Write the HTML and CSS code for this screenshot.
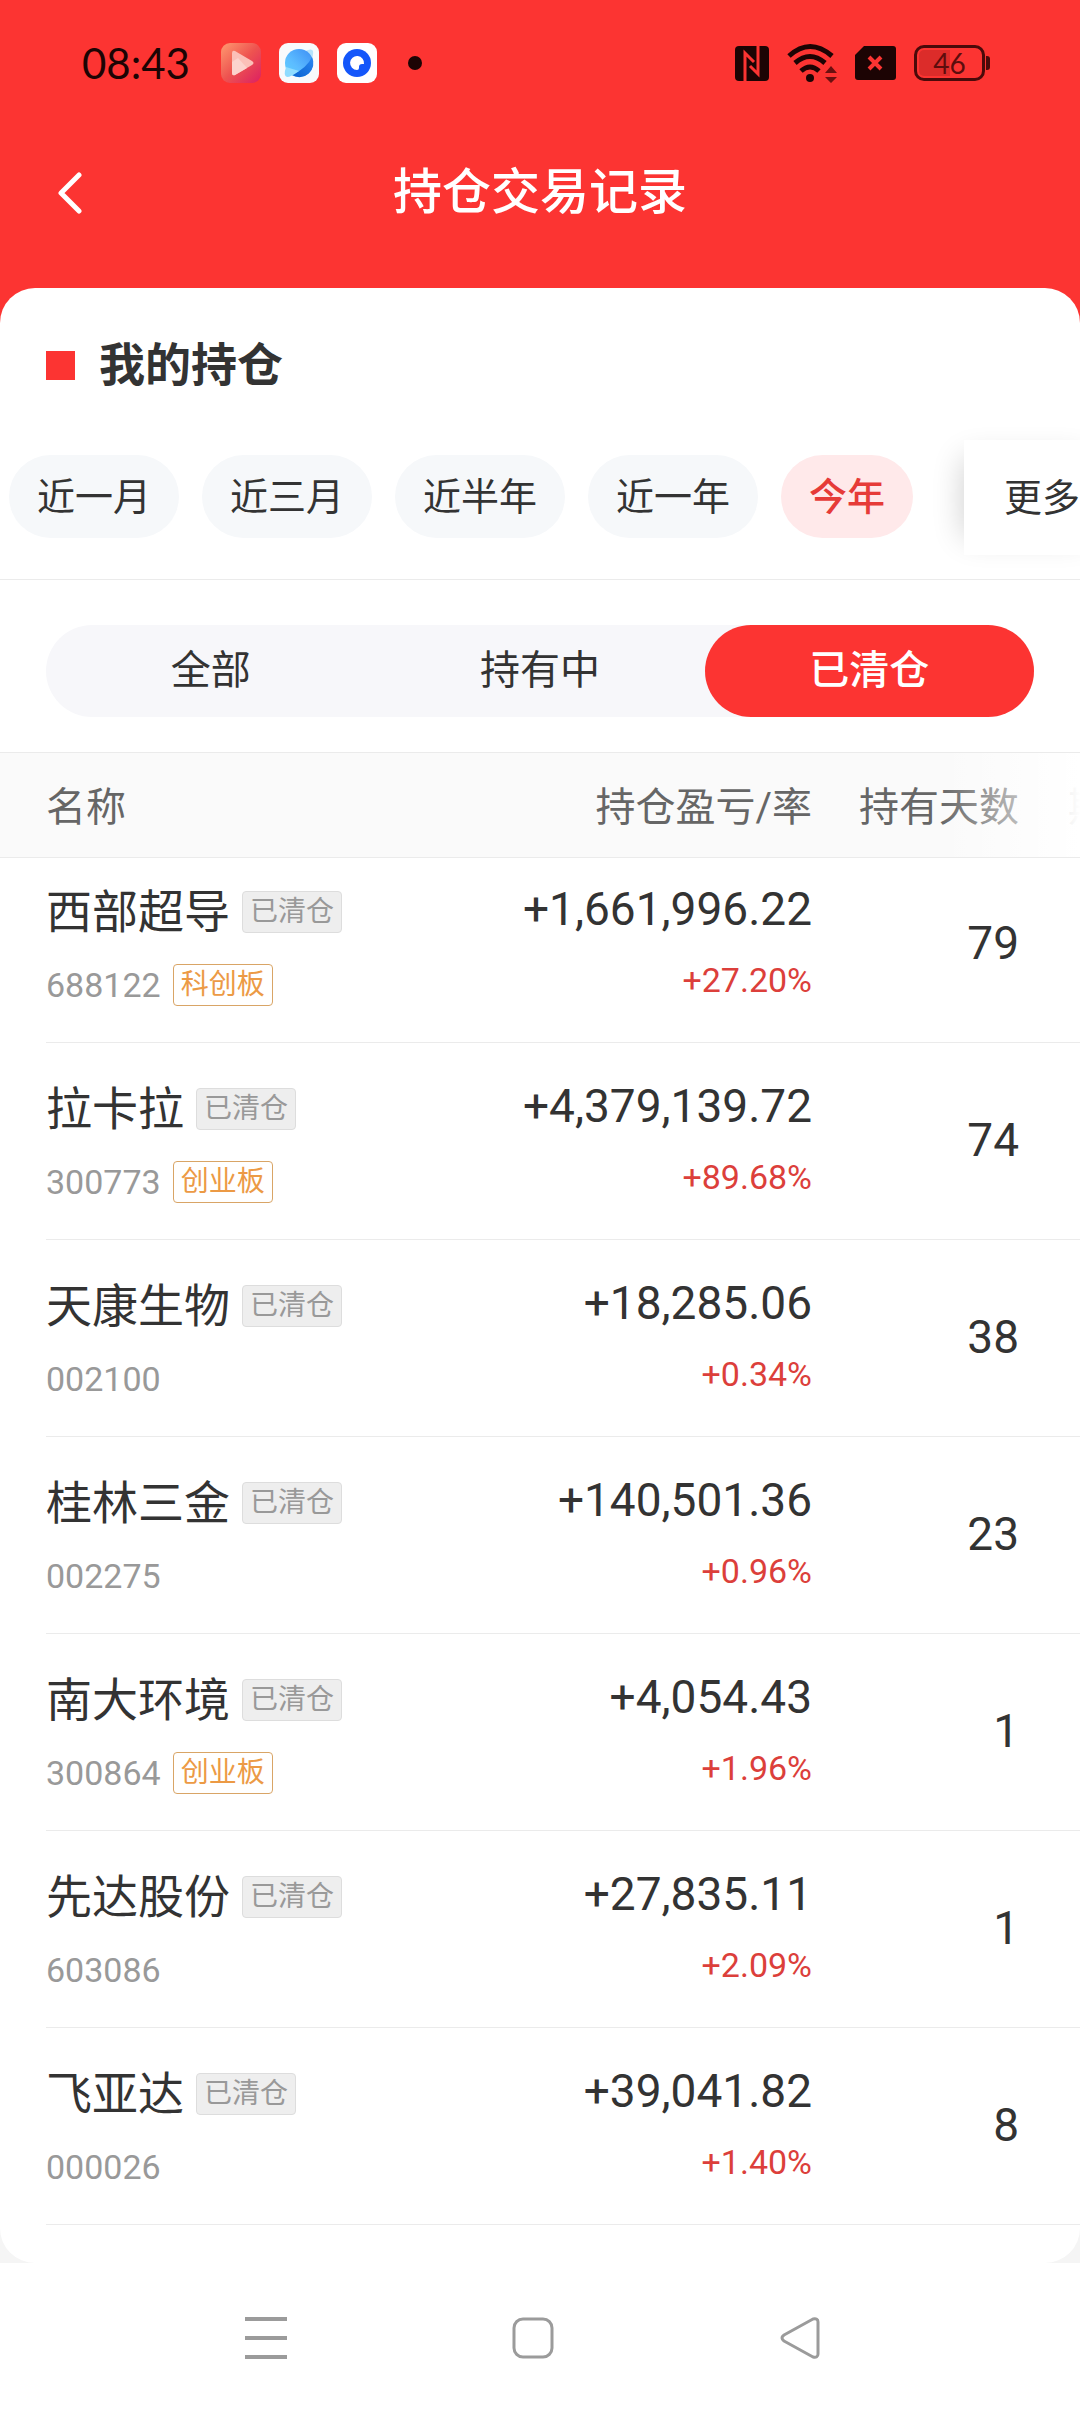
FILE: index.html
```html
<!DOCTYPE html>
<html lang="zh-CN">
<head>
<meta charset="utf-8">
<meta name="viewport" content="width=device-width, initial-scale=1">
<title>持仓交易记录</title>
<link rel="stylesheet" href="styles.css">
</head>
<body>
<div class="app">
  <div class="hero">
    <div class="status">
      <time class="clock">08:43</time>
      <div class="status-apps">
        <svg width="40" height="40" viewBox="0 0 40 40" aria-hidden="true">
          <defs>
            <linearGradient id="video" x1="0" y1="0" x2="1" y2="1"><stop offset="0" stop-color="#ff9a70"/><stop offset=".5" stop-color="#ee5350"/><stop offset="1" stop-color="#dc1f62"/></linearGradient>
          </defs>
          <rect width="40" height="40" rx="9" fill="url(#video)"/>
          <path d="M11 10Q11 7 14 8L31 18Q34 20 31 22L14 32Q11 33 11 30Z" fill="#fbc0b8"/>
          <path d="M11 19L17 15L26 25L14 32Q11 33 11 30Z" fill="#fcd3cd"/>
        </svg>
        <svg width="40" height="40" viewBox="0 0 40 40" aria-hidden="true">
          <defs>
            <linearGradient id="planet" x1="1" y1="0" x2="0" y2="1"><stop offset="0" stop-color="#3b8df5"/><stop offset=".6" stop-color="#5cbcff"/><stop offset="1" stop-color="#5fd0ff"/></linearGradient>
            <linearGradient id="shade" x1="1" y1="0" x2="0" y2="1"><stop offset="0" stop-color="#2a86f0"/><stop offset="1" stop-color="#0a62d0"/></linearGradient>
          </defs>
          <rect width="40" height="40" rx="9" fill="#f8fafc"/>
          <path d="M26 8Q33 5 34 8Q35 12 31 20Z" fill="#b5e2fb"/>
          <circle cx="20" cy="20" r="14" fill="url(#planet)"/>
          <path d="M33 14Q28 25 13 32A14 14 0 0 0 33 14Z" fill="url(#shade)"/>
          <path d="M7 24Q4 33 8 34Q12 34 20 28Z" fill="#8fdcff"/>
        </svg>
        <svg width="40" height="40" viewBox="0 0 40 40" aria-hidden="true">
          <rect width="40" height="40" rx="9" fill="#fff"/>
          <circle cx="20" cy="20" r="14" fill="#1456fa"/>
          <path d="M27 21A7 7 0 1 0 20 27Q22 27 22 25V24Q22 21 25 21Z" fill="#fff"/>
        </svg>
        <span class="dot"></span>
      </div>
      <div class="status-system">
        <svg width="34" height="35" viewBox="0 0 34 35" aria-hidden="true">
          <rect width="34" height="35" rx="4" fill="#1c0404"/>
          <path d="M10 35V7L19 16M23 0V28L15 20" fill="none" stroke="#fc3432" stroke-width="3"/>
        </svg>
        <svg width="50" height="40" viewBox="0 0 50 40" aria-hidden="true">
          <g fill="none" stroke="#1c0404" stroke-width="5"><path d="M2 13Q23 -6 45 13"/><path d="M8 20Q23 7 38 20"/><path d="M14 28Q23 20 32 28"/></g>
          <circle cx="23" cy="35" r="4" fill="#1c0404"/>
          <path d="M38 30L44 23L50 30ZM38 34H50L44 40Z" fill="#6b1010"/>
        </svg>
        <svg width="41" height="34" viewBox="0 0 41 34" aria-hidden="true">
          <path d="M9 0H38Q41 0 41 3V31Q41 34 38 34H3Q0 34 0 31V9Z" fill="#1c0404"/>
          <path d="M14 11L26 23M26 11L14 23" stroke="#fc3432" stroke-width="4"/>
        </svg>
        <span class="battery"><span class="battery-level"></span><span class="battery-text">46</span></span>
      </div>
    </div>
    <header class="titlebar">
      <button class="back" type="button" aria-label="返回">
        <svg width="24" height="42" viewBox="0 0 24 42" aria-hidden="true"><path d="M21 3L3 21L21 39" fill="none" stroke="#fff" stroke-width="5" stroke-linecap="round" stroke-linejoin="round"/></svg>
      </button>
      <h1>持仓交易记录</h1>
    </header>
  </div>

  <main class="card">
    <h2>我的持仓</h2>
    <div class="periods">
      <button type="button">近一月</button>
      <button type="button">近三月</button>
      <button type="button">近半年</button>
      <button type="button">近一年</button>
      <button type="button" class="selected">今年</button>
      <button type="button" class="more">更多</button>
    </div>
    <div class="tabs-wrap">
      <div class="tabs">
        <button type="button">全部</button>
        <button type="button">持有中</button>
        <button type="button" class="active">已清仓</button>
      </div>
    </div>
    <div class="table-wrap">
      <table>
        <colgroup><col><col class="c-profit"><col class="c-days"><col class="c-next"></colgroup>
        <thead><tr><th scope="col">名称</th><th scope="col">持仓盈亏/率</th><th scope="col">持有天数</th><th scope="col" class="next">期</th></tr></thead>
        <tbody>
          <tr><td><div class="name">西部超导<span class="tag">已清仓</span></div><div class="code">688122<span class="tag board">科创板</span></div></td><td><div class="amount">+1,661,996.22</div><div class="rate">+27.20%</div></td><td class="days">79</td><td></td></tr>
          <tr><td><div class="name">拉卡拉<span class="tag">已清仓</span></div><div class="code">300773<span class="tag board">创业板</span></div></td><td><div class="amount">+4,379,139.72</div><div class="rate">+89.68%</div></td><td class="days">74</td><td></td></tr>
          <tr><td><div class="name">天康生物<span class="tag">已清仓</span></div><div class="code">002100</div></td><td><div class="amount">+18,285.06</div><div class="rate">+0.34%</div></td><td class="days">38</td><td></td></tr>
          <tr><td><div class="name">桂林三金<span class="tag">已清仓</span></div><div class="code">002275</div></td><td><div class="amount">+140,501.36</div><div class="rate">+0.96%</div></td><td class="days">23</td><td></td></tr>
          <tr><td><div class="name">南大环境<span class="tag">已清仓</span></div><div class="code">300864<span class="tag board">创业板</span></div></td><td><div class="amount">+4,054.43</div><div class="rate">+1.96%</div></td><td class="days">1</td><td></td></tr>
          <tr><td><div class="name">先达股份<span class="tag">已清仓</span></div><div class="code">603086</div></td><td><div class="amount">+27,835.11</div><div class="rate">+2.09%</div></td><td class="days">1</td><td></td></tr>
          <tr><td><div class="name">飞亚达<span class="tag">已清仓</span></div><div class="code">000026</div></td><td><div class="amount">+39,041.82</div><div class="rate">+1.40%</div></td><td class="days">8</td><td></td></tr>
        </tbody>
      </table>
    </div>
  </main>

  <nav class="navbar">
    <button type="button" aria-label="菜单"><svg width="42" height="42" viewBox="0 0 42 42" aria-hidden="true"><path d="M0 2H42M0 21H42M0 40H42" stroke="#9b9b9b" stroke-width="4"/></svg></button>
    <button type="button" aria-label="主页"><svg width="42" height="42" viewBox="0 0 42 42" aria-hidden="true"><rect x="2" y="2" width="38" height="38" rx="9" fill="none" stroke="#9b9b9b" stroke-width="3"/></svg></button>
    <button type="button" aria-label="返回"><svg width="40" height="42" viewBox="0 0 40 42" aria-hidden="true"><path d="M33 2Q38 1 38 5V37Q38 41 33 40L4 24Q0 21 4 18Z" fill="none" stroke="#9b9b9b" stroke-width="3" stroke-linejoin="round"/></svg></button>
  </nav>
</div>
</body>
</html>
```
FILE: styles.css
```css
* { box-sizing: border-box; }

body {
  margin: 0;
  background: #fff;
  color: #333;
  font-family: Roboto, "Noto Sans CJK SC", sans-serif;
}

button {
  margin: 0;
  padding: 0;
  border: 0;
  background: none;
  color: inherit;
  font: inherit;
}

svg { display: block; }

.app {
  display: flex;
  flex-direction: column;
  min-height: 100vh;
  overflow: hidden;
  background: linear-gradient(#fc3432 400px, #f5f5f5 400px);
}

/* status bar and page title */
.status {
  display: flex;
  align-items: center;
  height: 126px;
  padding: 0 95px 0 82px;
}

.clock {
  width: 139px;
  color: #1c0404;
  font-family: Lato, sans-serif;
  font-size: 42px;
}

.status-apps, .status-system {
  display: flex;
  align-items: center;
  gap: 18px;
}

.dot {
  width: 14px;
  height: 14px;
  margin-left: 13px;
  border-radius: 50%;
  background: #1c0404;
}

.status-system { margin-left: auto; }

.battery {
  position: relative;
  width: 71px;
  height: 36px;
  border: 3px solid #4a0a0a;
  border-radius: 10px;
  color: #5c0d0d;
  font-family: Lato, sans-serif;
  font-size: 28px;
  line-height: 30px;
  text-align: center;
}

.battery::after {
  content: "";
  position: absolute;
  top: 8px;
  right: -8px;
  width: 4px;
  height: 14px;
  border-radius: 0 3px 3px 0;
  background: #4a0a0a;
}

.battery-level {
  position: absolute;
  inset: 2px 50% 2px 2px;
  border-radius: 5px 0 0 5px;
  background: #dc2c2a;
}

.battery-text { position: relative; }

.titlebar {
  display: grid;
  grid-template-columns: 100px 1fr 100px;
  align-items: center;
  height: 162px;
  padding-bottom: 28px;
}

.back { padding-left: 58px; }

h1 {
  margin: 0;
  color: #fff;
  font-size: 49px;
  font-weight: 500;
  line-height: 60px;
  text-align: center;
}

/* white sheet */
.card {
  flex: 1;
  border-radius: 35px;
  background: #fff;
  overflow: hidden;
}

h2 {
  display: flex;
  align-items: center;
  gap: 24px;
  margin: 0;
  padding: 47px 46px 0;
  font-size: 46px;
  font-weight: 700;
  line-height: 60px;
}

h2::before {
  content: "";
  width: 29px;
  height: 29px;
  background: #fc3432;
}

.periods {
  position: relative;
  display: flex;
  align-items: center;
  gap: 23px;
  height: 185px;
  padding: 19px 0 0 9px;
  border-bottom: 1px solid #ebebeb;
  overflow: hidden;
}

.periods button {
  flex: none;
  height: 83px;
  padding: 0 28px;
  border-radius: 42px;
  background: #f6f8fa;
  font-size: 38px;
  line-height: 42px;
}

.periods .selected {
  background: #ffe9ea;
  color: #e63b38;
  font-weight: 500;
}

.periods .more {
  position: absolute;
  top: 45px;
  right: -40px;
  height: 115px;
  padding: 0 40px;
  border-radius: 0;
  background: #fff;
  box-shadow: -18px 0 32px -18px #0003;
}

.tabs-wrap { padding: 45px 46px 35px; }

.tabs {
  display: grid;
  grid-template-columns: repeat(3, 1fr);
  border-radius: 46px;
  background: #f7f7fa;
}

.tabs button {
  height: 92px;
  border-radius: 46px;
  font-size: 40px;
  line-height: 48px;
}

.tabs .active {
  background: #fc3432;
  color: #fff;
  font-weight: 500;
}

/* holdings */
.table-wrap { position: relative; }

.table-wrap::after {
  content: "";
  position: absolute;
  top: 1px;
  right: 0;
  width: 140px;
  height: 104px;
  background: linear-gradient(90deg, #fff0, #fff);
}

table {
  width: 100%;
  border-collapse: separate;
  border-spacing: 0;
  table-layout: fixed;
}

.c-profit { width: 400px; }
.c-days { width: 207px; }
.c-next { width: 61px; }

th {
  height: 106px;
  padding: 6px 0 0;
  border: solid #ebebeb;
  border-width: 1px 0;
  background: #fafafa;
  color: #666;
  font-size: 40px;
  font-weight: 400;
  line-height: 48px;
  text-align: right;
  white-space: nowrap;
}

th:first-child {
  padding-left: 46px;
  text-align: left;
}

th.next {
  padding-left: 49px;
  overflow: hidden;
  text-align: left;
}

td {
  height: 197px;
  padding: 0 0 42px;
  background: linear-gradient(#ebebeb, #ebebeb) 0 100% / 100% 1px no-repeat;
  text-align: right;
  vertical-align: bottom;
}

tr:first-child td { height: 185px; }

td:first-child {
  padding: 0 0 37px 46px;
  background-position: 46px 100%;
  text-align: left;
}

.name, .code {
  display: flex;
  align-items: center;
  gap: 12px;
}

.name {
  height: 48px;
  margin-bottom: 28px;
  font-size: 46px;
  line-height: 48px;
}

.code {
  height: 42px;
  color: #999;
  font-size: 34px;
  line-height: 42px;
}

.tag {
  width: 100px;
  height: 42px;
  border: 1px solid #ddd;
  border-radius: 4px;
  background: #eee;
  color: #999;
  font-size: 28px;
  line-height: 40px;
  text-align: center;
}

.board {
  border-color: #d9a566;
  background: #fff;
  color: #ec9a45;
}

.amount {
  margin-bottom: 26px;
  font-size: 46px;
  line-height: 48px;
}

.rate {
  color: #dc3f3b;
  font-size: 34px;
  line-height: 42px;
}

td.days {
  padding-bottom: 76px;
  font-size: 46px;
  line-height: 48px;
}

/* system navigation */
.navbar {
  display: grid;
  grid-template-columns: repeat(3, 1fr);
  height: 149px;
  padding: 0 147px 0 132px;
  background: #fff;
}

.navbar button {
  display: flex;
  align-items: center;
  justify-content: center;
}
```
